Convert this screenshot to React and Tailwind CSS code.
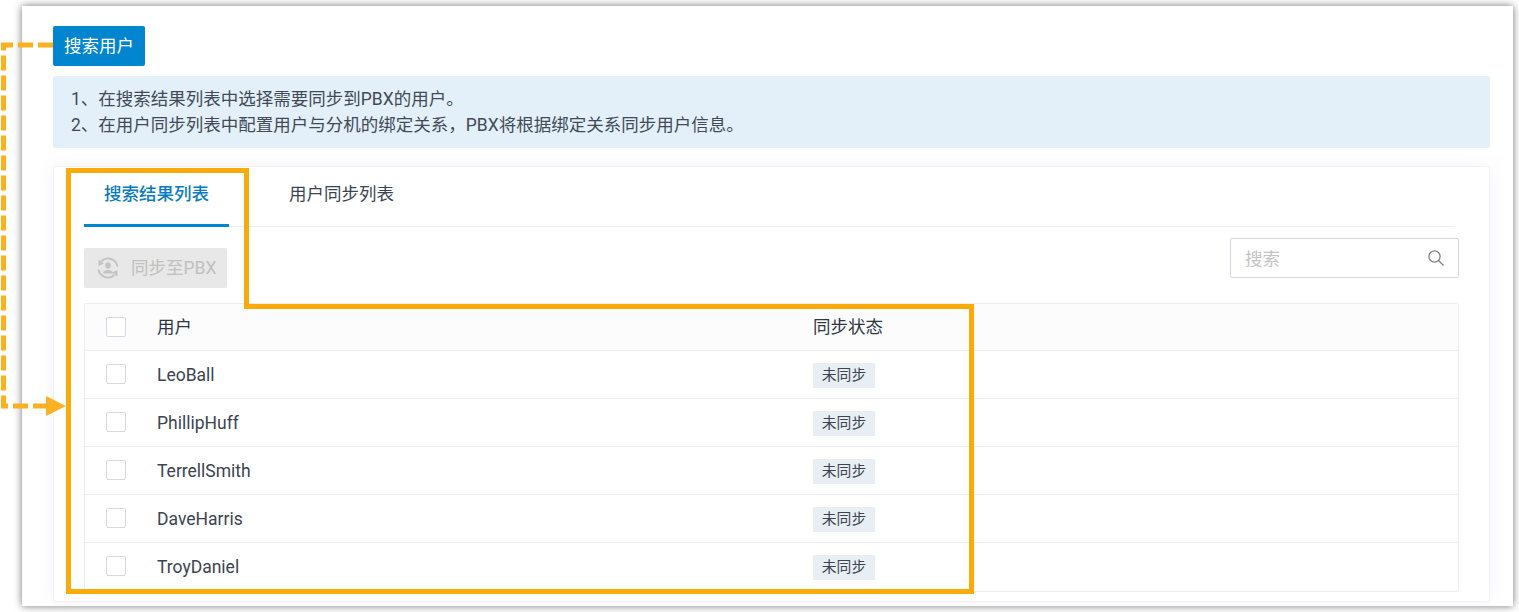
const font = { fontFamily: '"Roboto", "Noto Sans CJK SC", sans-serif' }

const users = ['LeoBall', 'PhillipHuff', 'TerrellSmith', 'DaveHarris', 'TroyDaniel']

function Checkbox() {
  return <span className="block w-[20px] h-[20px] bg-white border border-[#d8d8e4] rounded-[2px]" />
}

function SyncUserIcon() {
  return (
    <svg width="24" height="24" viewBox="0 0 24 24" fill="none" stroke="#c4c4c4" strokeWidth="2">
      <path d="M21.500 10.500A9.700 9.700 0 0 0 5.500 5" />
      <path d="M2.500 13.500A9.700 9.700 0 0 0 18.500 19" />
      <path d="M2.500 3.500l5.500 4-5.500 2.500z" fill="#c4c4c4" stroke="none" />
      <path d="M21.500 20.500l-5.500-4 5.500-2.500z" fill="#c4c4c4" stroke="none" />
      <ellipse cx="12" cy="9.500" rx="2.800" ry="3.300" fill="#c4c4c4" stroke="none" />
      <path d="M7 17.500c0-2.500 2.200-3.500 5-3.500s5 1 5 3.500z" fill="#c4c4c4" stroke="none" />
    </svg>
  )
}

function Annotations() {
  return (
    <svg className="absolute left-0 top-0 pointer-events-none" width="1519" height="612" fill="none">
      <path d="M53 45H3.500V406H47" stroke="#fbb01f" strokeWidth="5" strokeDasharray="15 5" />
      <path d="M46 396l20 10-20 10z" fill="#fab122" />
      <path d="M68.500 170.500H246.500V306.500H971.500V591.500H68.500z" stroke="#fbab09" strokeWidth="5" />
    </svg>
  )
}

export default function App() {
  return (
    <div className="relative w-[1519px] h-[612px] bg-white overflow-hidden text-[#3c4452]" style={font}>
      <div className="ml-[22px] mt-[6px] w-[1491px] h-[600px] bg-white pl-[31px] pr-[23px] pt-[20px] shadow-[0_0_8px_rgba(0,0,0,0.55)]">
        <button className="block w-[92px] h-[40px] bg-[#0085ce] rounded-[2px] text-white text-[17.500px]">
          搜索用户
        </button>

        <div className="mt-[10px] h-[72px] bg-[#e3f0f9] rounded-[2px] pl-[18px] pt-[10px] text-[17.500px] leading-[26px] text-[#424a57]">
          <p>1、在搜索结果列表中选择需要同步到PBX的用户。</p>
          <p>2、在用户同步列表中配置用户与分机的绑定关系，PBX将根据绑定关系同步用户信息。</p>
        </div>

        <div className="mt-[18px] h-[436px] border border-[#f1f1f6] rounded-[2px] pl-[30px] pr-[30px] shadow-[0_0_16px_rgba(225,225,240,0.4)]">
          <div className="flex h-[60px] w-[1369px] border-b border-[#ececf4] text-[17.500px]">
            <div className="w-[145px] h-[60px] border-b-[3px] border-[#0085ce] text-[#0a7cc0] font-medium text-center leading-[55px]">
              搜索结果列表
            </div>
            <div className="ml-[60px] leading-[55px] text-[#3c4452]">用户同步列表</div>
          </div>

          <div className="flex justify-between items-start h-[76px] pt-[11px]">
            <button className="mt-[10px] flex items-center w-[143px] h-[40px] pl-[12px] bg-[#e8e8e8] rounded-[2px] text-[#c0c0c0] text-[17.500px]">
              <SyncUserIcon />
              <span className="ml-[11px]">同步至PBX</span>
            </button>
            <div className="flex items-center justify-between w-[229px] h-[40px] px-[14px] bg-white border border-[#d6d6e0] rounded-[2px]">
              <span className="mt-[2px] text-[17.500px] text-[#c4c4c4]">搜索</span>
              <svg width="16" height="16" viewBox="0 0 16 16" fill="none" stroke="#808080" strokeWidth="1.300">
                <circle cx="6.500" cy="6.500" r="5.600" />
                <path d="M10.500 10.500L15.500 15.500" />
              </svg>
            </div>
          </div>

          <div className="w-[1375px] border border-[#ececf4] rounded-[2px]">
            <div className="flex items-center h-[47px] bg-[#fcfcfd] border-b border-[#ececf4] text-[#2f3643] text-[17.500px]">
              <div className="w-[72px] pl-[21px] pb-[1px]"><Checkbox /></div>
              <div className="w-[656px] mt-[1px]">用户</div>
              <div className="mt-[1px]">同步状态</div>
            </div>
            {users.map((name) => (
              <div key={name} className="flex items-center h-[48px] border-b border-[#ececf4] last:border-b-transparent">
                <div className="w-[72px] pl-[21px] pb-[2px]"><Checkbox /></div>
                <div className="w-[656px] mt-[2px] text-[17.500px]">{name}</div>
                <div className="mt-[2px] w-[62px] h-[25px] bg-[#e9edf4] text-center text-[14.800px] leading-[25px]">未同步</div>
              </div>
            ))}
          </div>
        </div>
      </div>
      <Annotations />
    </div>
  )
}
